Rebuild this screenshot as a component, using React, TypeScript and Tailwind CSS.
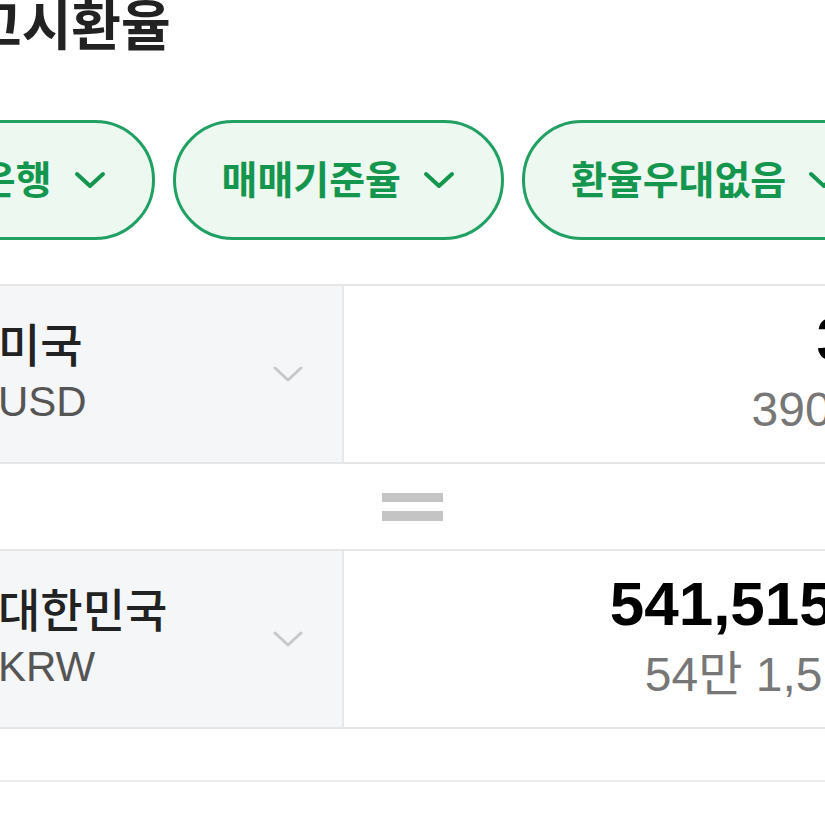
import React from 'react';

const Chevron = ({ className, width }: { className: string; width: number }) => (
  <svg viewBox="0 0 32 18" className={className} fill="none" stroke="currentColor" strokeWidth={width} strokeLinecap="round" strokeLinejoin="round">
    <path d="M3 3 L16 15 L29 3" />
  </svg>
);

const Pill = ({ label }: { label: string }) => (
  <div className="flex shrink-0 items-center h-[120px] px-[46px] rounded-full border-[3px] border-[#21a063] bg-[#edf8f1]">
    <span className="text-[39px] font-bold text-[#15964f] leading-none">{label}</span>
    <Chevron className="ml-[22px] w-[32px] h-[18px] text-[#15964f]" width={4} />
  </div>
);

interface CurrencyRow {
  name: string;
  code: string;
  amount: string;
  sub: string;
}

const rows: CurrencyRow[] = [
  { name: '미국', code: 'USD', amount: '390', sub: '390달러' },
  { name: '대한민국', code: 'KRW', amount: '541,515.00', sub: '54만 1,515원' },
];

const Row = ({ row }: { row: CurrencyRow }) => (
  <div className="flex h-[180px] border-y-2 border-[#e6e6e6]">
    <div className="flex w-[504px] items-center justify-between bg-[#f5f6f8] border-r-2 border-[#e8e8ea] pl-[158px] pr-[38px]">
      <div className="flex flex-col">
        <span className="text-[46px] leading-[55px] font-medium text-[#222]">{row.name}</span>
        <span className="text-[42px] leading-[55px] font-medium text-[#555]">{row.code}</span>
      </div>
      <Chevron className="w-[32px] h-[18px] text-[#c8c8c8]" width={3} />
    </div>
    <div className="flex flex-1 flex-col items-end justify-center pr-[40px] bg-white">
      <span className="text-[62px] leading-[71px] font-bold text-black">{row.amount}</span>
      <span className="text-[48px] leading-[71px] text-[#777]">{row.sub}</span>
    </div>
  </div>
);

export default function App() {
  return (
    <div className="w-[825px] h-[825px] overflow-hidden bg-white font-['Liberation_Sans','Noto_Sans_CJK_KR',sans-serif]">
      <div className="ml-[-160px] w-[1120px]">
        {/* 제목 */}
        <h1 className="pl-[132px] text-[54px] leading-[55px] font-bold text-[#222]">고시환율</h1>

        {/* 필터 */}
        <div className="mt-[65px] flex gap-[18px] pl-[19px]">
          <Pill label="하나은행" />
          <Pill label="매매기준율" />
          <Pill label="환율우대없음" />
        </div>

        {/* 계산기 */}
        <div className="mt-[44px]">
          <Row row={rows[0]} />
          <div className="flex h-[85px] flex-col items-center justify-center gap-[9px] pl-[25px]">
            <div className="w-[61px] h-[9px] bg-[#c4c4c4]" />
            <div className="w-[61px] h-[10px] bg-[#c4c4c4]" />
          </div>
          <Row row={rows[1]} />
        </div>

        <div className="mt-[51px] border-t-2 border-[#ececec]" />
      </div>
    </div>
  );
}
